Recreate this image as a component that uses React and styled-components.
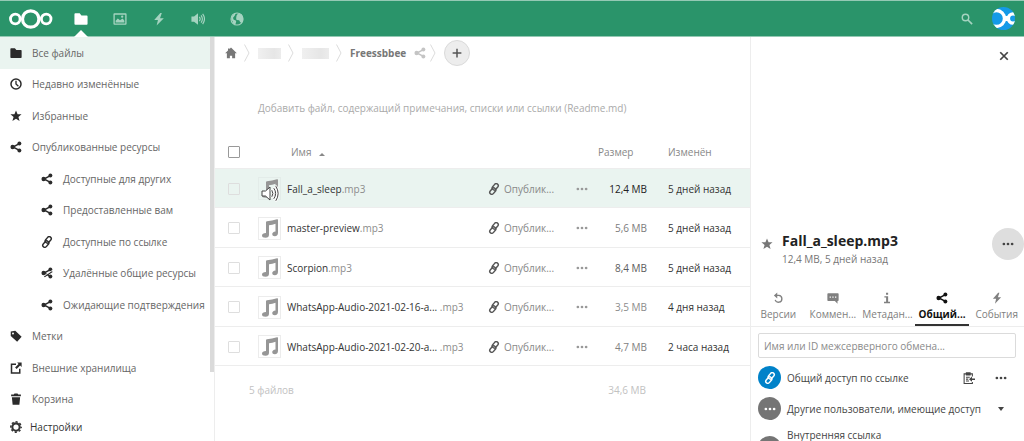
import * as React from 'react';
import styled, { createGlobalStyle } from 'styled-components';

const GlobalStyle = createGlobalStyle`
  :root {
    --colorBrand: #2a946a;
    --colorEdge: #94c9b4;
    --colorActive: #eaf4f0;
    --colorBorder: #ededed;
    --colorText: #333;
    --colorMuted: #767676;
  }
  * {
    box-sizing: border-box;
  }
  body {
    margin: 0;
    background: #fff;
    color: var(--colorText);
    font-family: 'Open Sans', 'Noto Sans', sans-serif;
    font-size: 10px;
    line-height: 16px;
  }
  button, input {
    font: inherit;
    color: inherit;
  }
  a {
    color: inherit;
    text-decoration: none;
  }
`;

const Page = styled.div`
  display: flex;
  flex-direction: column;
  height: 100vh;
  overflow: hidden;
`;
const Header = styled.header`
  flex: none;
  display: flex;
  align-items: stretch;
  justify-content: space-between;
  height: 37px;
  padding-left: 9px;
  border-top: 1px solid var(--colorEdge);
  border-bottom: 1px solid var(--colorEdge);
  background: var(--colorBrand);
  color: #fff;
`;
const HeaderGroup = styled.div`
  display: flex;
  align-items: center;
`;
const Logo = styled.a`
  display: flex;
  margin-right: 8px;
`;
const AppLink = styled.a`
  position: relative;
  display: flex;
  align-items: center;
  justify-content: center;
  width: 39px;
  height: 35px;
  color: ${({ $active }) => ($active ? '#fff' : '#a5d3c0')};

  &::after {
    content: '';
    display: ${({ $active }) => ($active ? 'block' : 'none')};
    position: absolute;
    bottom: -1px;
    left: 13px;
    border: 7px solid transparent;
    border-top-width: 0;
    border-bottom-color: #fff;
  }
`;
const IconButton = styled.button`
  display: flex;
  align-items: center;
  justify-content: center;
  flex: none;
  width: ${({ $size }) => $size || 26}px;
  height: ${({ $size }) => $size || 26}px;
  padding: 0;
  border: ${({ $outlined }) => ($outlined ? '1px solid #dadada' : '0')};
  border-radius: 50%;
  background: ${({ $fill }) => $fill || 'transparent'};
  color: ${({ $color }) => $color || 'inherit'};
`;
const Columns = styled.div`
  flex: 1;
  min-height: 0;
  display: grid;
  grid-template-columns: 215px minmax(0, 1fr) 274px;
`;

const Sidebar = styled.nav`
  position: relative;
  display: flex;
  flex-direction: column;
  min-height: 0;
  border-right: 1px solid var(--colorBorder);
`;
const NavList = styled.ul`
  flex: 1;
  display: grid;
  grid-auto-rows: 1fr;
  min-height: 0;
  margin: 0;
  padding: 0;
  list-style: none;
`;
const NavLink = styled.a`
  display: flex;
  align-items: center;
  gap: 10px;
  height: 100%;
  padding-left: ${({ $nested }) => ($nested ? 41 : 10)}px;
  background: ${({ $active }) => ($active ? 'var(--colorActive)' : 'transparent')};
  color: #666;

  svg {
    color: #2b2b2b;
  }
`;
const ScrollThumb = styled.div`
  position: absolute;
  top: 0;
  right: 0;
  width: 4px;
  height: 83%;
  background: #dadada;
`;
const SettingsButton = styled.button`
  flex: none;
  display: flex;
  align-items: center;
  gap: 8px;
  height: 26px;
  padding: 0 0 3px 10px;
  border: 0;
  background: none;
  text-align: left;
`;

const Main = styled.main`
  min-width: 0;
  overflow: hidden;
`;
const Breadcrumb = styled.div`
  display: flex;
  align-items: center;
  height: 32px;
  padding-left: 10px;
  color: #777;
`;
const Crumb = styled.a`
  display: flex;
  align-items: center;
  margin-right: ${({ $gap }) => $gap || 7}px;
  font-weight: bold;
  color: #777;
`;
const Redacted = styled.span`
  width: ${({ $width }) => $width}px;
  height: 11px;
  background: linear-gradient(90deg, #f0f0f0, #e6e6e6 70%, #ececec);
`;
const Separator = styled.svg`
  flex: none;
  width: 6px;
  height: 18px;
  margin-right: 8px;
  fill: none;
  stroke: #dcdcdc;
`;
const Readme = styled.p`
  margin: 31px 0 0 43px;
  color: #aaa;
`;
const FileTable = styled.table`
  width: 100%;
  height: 232px;
  margin-top: 18px;
  table-layout: fixed;
  border-collapse: collapse;
`;
const HeadCell = styled.th`
  height: 34px;
  padding: 2px ${({ $right }) => $right || 0}px 0 ${({ $left }) => $left || 0}px;
  border-bottom: 1px solid var(--colorBorder);
  font-weight: normal;
  text-align: ${({ $align }) => $align || 'left'};
  color: #888;
`;
const FileRow = styled.tr`
  background: ${({ $selected }) => ($selected ? 'var(--colorActive)' : 'transparent')};
`;
const Cell = styled.td`
  padding: 2px ${({ $right }) => $right || 0}px 0 ${({ $left }) => $left || 0}px;
  border-bottom: 1px solid var(--colorBorder);
  text-align: ${({ $align }) => $align || 'left'};
  color: ${({ $color }) => $color || 'inherit'};
  white-space: nowrap;
`;
const Checkbox = styled.input.attrs({ type: 'checkbox' })`
  display: block;
  appearance: none;
  width: 12px;
  height: 12px;
  margin: 0 0 0 13px;
  border: 1px solid ${({ $strong }) => ($strong ? '#999' : '#dedede')};
  border-radius: 1px;
`;
const Thumb = styled.div`
  position: relative;
  width: 23px;
  height: 23px;
  padding: 1px;
  border: 1px solid ${({ $playing }) => ($playing ? '#e3ece9' : '#ececec')};

  svg {
    display: block;
  }
`;
const PlayingBadge = styled.span`
  position: absolute;
  top: 7px;
  left: 2px;
`;
const Extension = styled.span`
  color: #8c8c8c;
`;
const SharedLink = styled.a`
  display: flex;
  align-items: center;
  gap: 4px;
  color: #888;

  svg {
    color: #555;
  }
`;
const Summary = styled.div`
  display: flex;
  justify-content: space-between;
  padding: 16px 104px 0 34px;
  color: #c2c2c2;
`;

const Details = styled.aside`
  display: flex;
  flex-direction: column;
  min-width: 0;
  overflow: hidden;
  border-left: 1px solid var(--colorBorder);
`;
const DetailsTop = styled.div`
  display: flex;
  justify-content: flex-end;
  height: 191px;
  padding: 6px 7px;
  flex: none;
`;
const DetailsTitle = styled.div`
  flex: none;
  display: flex;
  align-items: center;
  height: 32px;
  padding-left: 10px;
`;
const TitleText = styled.div`
  flex: 1;
  padding: 9px 0 0 9px;
  color: var(--colorMuted);
`;
const Title = styled.h2`
  margin: 0;
  font-size: 14px;
  line-height: 20px;
  color: #222;
`;
const Tabs = styled.div`
  flex: none;
  display: grid;
  grid-template-columns: repeat(5, minmax(0, 1fr));
  margin-top: 27px;
  border-bottom: 1px solid var(--colorBorder);
`;
const Tab = styled.button`
  display: flex;
  flex-direction: column;
  align-items: center;
  gap: 2px;
  padding: 5px 0 2px;
  border: 0;
  border-bottom: 2px solid ${({ $active }) => ($active ? '#333' : 'transparent')};
  background: none;
  font-weight: ${({ $active }) => ($active ? 'bold' : 'normal')};
  color: ${({ $active }) => ($active ? '#111' : '#808080')};
  white-space: nowrap;
`;
const ShareInput = styled.input`
  flex: none;
  height: 25px;
  margin: 6px 8px 4px 7px;
  padding: 0 5px;
  border: 1px solid #dbdbdb;
  border-radius: 2px;

  &::placeholder {
    color: #8a8a8a;
    opacity: 1;
  }
`;
const ShareRow = styled.div`
  flex: none;
  display: flex;
  align-items: center;
  gap: 6px;
  height: ${({ $tall }) => ($tall ? 47 : 31)}px;
  padding: 0 10px 0 7px;
`;
const ShareName = styled.span`
  flex: 1;
  align-self: ${({ $top }) => ($top ? 'flex-start' : 'center')};
  padding-top: ${({ $top }) => ($top ? 4 : 0)}px;
  line-height: 14px;
  white-space: nowrap;
  color: #444;
`;
const Avatar = styled.span`
  flex: none;
  display: flex;
  align-items: center;
  justify-content: center;
  width: 23px;
  height: 23px;
  border-radius: 50%;
  background: ${({ $fill }) => $fill};
  color: #fff;
`;

const Icon = ({ size = 12, children }) => (
  <svg width={size} height={size} viewBox="0 0 16 16" fill="currentColor" aria-hidden="true">
    {children}
  </svg>
);

const FolderIcon = ({ size }) => (
  <Icon size={size}>
    <path d="M1.5 1.5h5l2 2.5h6a1 1 0 0 1 1 1v8.500a1 1 0 0 1-1 1h-13a1 1 0 0 1-1-1v-11a1 1 0 0 1 1-1z" />
  </Icon>
);
const PictureIcon = () => (
  <Icon size={14}>
    <path
      fillRule="evenodd"
      d="M1.500 1.500h13a1 1 0 0 1 1 1v11a1 1 0 0 1-1 1h-13a1 1 0 0 1-1-1v-11a1 1 0 0 1 1-1zM2 3v10h12V3z"
    />
    <path d="M3 12v-2l2.500-2.500L8 9.500l3-2 2 2.500v2z" />
    <circle cx="10.500" cy="5.300" r="1.300" />
  </Icon>
);
const BoltIcon = ({ size = 14 }) => (
  <Icon size={size}>
    <path d="M9.500 1 2.500 9h4.300L5.300 15.500 13.500 7H9.200l2-6z" />
  </Icon>
);
const SoundIcon = () => (
  <Icon size={14}>
    <path d="M.5 5h3L8 1.500v13L3.500 11h-3z" />
    <path
      fill="none"
      stroke="currentColor"
      strokeWidth="1.300"
      d="M9.500 5.500q2 2.500 0 5M11.500 3.800q3 4.200 0 8.400M13.300 2.200q4.200 5.800 0 11.600"
    />
  </Icon>
);
const GlobeIcon = () => (
  <Icon size={14}>
    <circle cx="8" cy="8" r="6.900" fill="none" stroke="currentColor" strokeWidth="1.200" />
    <path d="M1.500 6 4 2.500 6.500 1.500 5.500 4 3.500 6.500 4 8.500l3 1.500v1.500l-1 3L3.500 13 3 10.500 1.500 9zM7.500 4 9 2l4 .5L15 6v4l-2 2.500-1.500-1-1-2-3-.5L7 7z" />
  </Icon>
);
const ShareIcon = ({ size }) => (
  <Icon size={size}>
    <path fill="none" stroke="currentColor" strokeWidth="2" d="M12.500 3.500 4 8l8.500 4.500" />
    <circle cx="12.500" cy="3.300" r="2.600" />
    <circle cx="3.500" cy="8" r="2.900" />
    <circle cx="12.500" cy="12.700" r="2.600" />
  </Icon>
);
const UnshareIcon = () => (
  <Icon>
    <path fill="none" stroke="currentColor" strokeWidth="2" d="M12.500 3.500 4 8l8.500 4.500M4.500 13 15 6" />
    <circle cx="12.500" cy="3.300" r="2.600" />
    <circle cx="3.500" cy="8" r="2.900" />
    <circle cx="12.500" cy="12.700" r="2.600" />
    <path fill="none" stroke="#fff" strokeWidth="1" d="M5 11.300 15 4.600" />
  </Icon>
);
const LinkIcon = () => (
  <Icon>
    <g transform="rotate(-50 8 8)" fill="none" stroke="currentColor" strokeWidth="1.900">
      <rect x="0" y="5.900" width="9.500" height="5.400" rx="2.700" />
      <rect x="6.500" y="4.700" width="9.500" height="5.400" rx="2.700" />
    </g>
  </Icon>
);
const ClockIcon = () => (
  <Icon>
    <circle cx="8" cy="8" r="6.700" fill="none" stroke="currentColor" strokeWidth="2" />
    <path fill="none" stroke="currentColor" strokeWidth="1.800" d="M8 3.500V8l3.200 3" />
  </Icon>
);
const StarIcon = () => (
  <Icon>
    <path d="m8 .8 2.100 5h5.300l-4.200 3.400 1.600 5.600L8 11.500l-4.800 3.300 1.600-5.600L.6 5.800h5.300z" />
  </Icon>
);
const TagIcon = () => (
  <Icon>
    <path
      fillRule="evenodd"
      d="M1 2 7 1l8.500 8-6 6.500L1 8zM4 3.300a1.300 1.300 0 1 0 0 2.600 1.300 1.300 0 0 0 0-2.600z"
    />
  </Icon>
);
const ExternalIcon = () => (
  <Icon>
    <path fill="none" stroke="currentColor" strokeWidth="2" d="M8 3H2v11.500h11V9" />
    <path d="M9.500.5h6v6.200l-2-2-4.700 4.600-2-2 4.600-4.600z" />
  </Icon>
);
const TrashIcon = () => (
  <Icon>
    <path d="M6 .8h4L11 2h3.500v2.300h-13V2H5zM2.500 5.500h11L12.500 15.500h-9z" />
  </Icon>
);
const GearIcon = () => (
  <Icon>
    <circle cx="8" cy="8" r="4.900" fill="none" stroke="currentColor" strokeWidth="2.800" />
    <circle
      cx="8"
      cy="8"
      r="6.900"
      fill="none"
      stroke="currentColor"
      strokeWidth="2"
      strokeDasharray="2.900 2.519"
      strokeDashoffset="1.450"
    />
  </Icon>
);
const HomeIcon = () => (
  <Icon>
    <path d="m8 .8 7.800 7.400h-2.300V15h-4v-3.500h-3V15h-4V8.200H.2L4 4.600V2h2v.8z" />
  </Icon>
);
const DotsIcon = () => (
  <Icon>
    <circle cx="2.500" cy="8" r="1.800" />
    <circle cx="8" cy="8" r="1.800" />
    <circle cx="13.500" cy="8" r="1.800" />
  </Icon>
);
const NoteIcon = () => (
  <svg width="19" height="19" viewBox="0 0 19 19" fill="#969696" aria-hidden="true">
    <path d="M7 2.200Q12 2 17 .3q1-.3 1 .7v12.500q0 3.800-3.300 3.800-2.500 0-2.500-2 0-2.300 3.300-2.800V4.800Q12.500 6 9 6.200v9.300q0 3.200-3.500 3.200-3.500 0-3.500-2.200 0-2.300 4-2.500V3.300q0-1 1-1.100z" />
  </svg>
);
const SpeakerBadgeIcon = () => (
  <svg width="19" height="17" viewBox="0 0 19 17" aria-hidden="true">
    <path d="M1 6h3.500L9 2v13l-4.500-4H1z" fill="#fff" stroke="#444" />
    <g fill="none" strokeLinecap="round">
      <path d="M11 5.500q2 3 0 6M13 3.500q3.500 5 0 10M15 1.500q4.500 7 0 14" stroke="#fff" strokeWidth="2.500" />
      <path d="M11 5.500q2 3 0 6M13 3.500q3.500 5 0 10M15 1.500q4.500 7 0 14" stroke="#444" />
    </g>
  </svg>
);
const CommentIcon = () => (
  <Icon>
    <path
      fillRule="evenodd"
      d="M1.500 1.500h13a1 1 0 0 1 1 1v8.500a1 1 0 0 1-1 1h-.5v3.500L10.500 12h-9a1 1 0 0 1-1-1V2.500a1 1 0 0 1 1-1zM3.500 6v1.700h1.700V6zM7.100 6v1.700h1.700V6zM10.700 6v1.700h1.700V6z"
    />
  </Icon>
);
const HistoryIcon = () => (
  <Icon>
    <path fill="none" stroke="currentColor" strokeWidth="1.800" d="M5 4.500h4a4.600 4.600 0 1 1-4.800 6" />
    <path d="M7 .5v8L2.500 4.500z" />
  </Icon>
);
const InfoIcon = () => (
  <Icon>
    <path d="M6.700 1h2.800v2.500H6.700zM4.500 5.500h5V13H12v2H4v-2h2.800V7.400H4.500z" />
  </Icon>
);
const ClipboardIcon = () => (
  <Icon>
    <g fill="none" stroke="currentColor" strokeWidth="1.400">
      <path d="M12.500 6V2.500h-11v12.800h11v-2M4.500 1h5v3h-5zM4 7h5M4 9.500h3M4 12h4" />
    </g>
    <path d="M8 9.500 12 6v2.500h4v2h-4V13z" />
  </Icon>
);
const CaretIcon = ({ up }) => (
  <svg width="6" height="4" viewBox="0 0 6 4" fill="currentColor" aria-hidden="true">
    <path d={up ? 'M0 4 3 1l3 3z' : 'M0 0h6L3 4z'} />
  </svg>
);

const NAV = [
  { label: 'Все файлы', icon: FolderIcon, active: true },
  { label: 'Недавно изменённые', icon: ClockIcon },
  { label: 'Избранные', icon: StarIcon },
  { label: 'Опубликованные ресурсы', icon: ShareIcon },
  { label: 'Доступные для других', icon: ShareIcon, nested: true },
  { label: 'Предоставленные вам', icon: ShareIcon, nested: true },
  { label: 'Доступные по ссылке', icon: LinkIcon, nested: true },
  { label: 'Удалённые общие ресурсы', icon: UnshareIcon, nested: true },
  { label: 'Ожидающие подтверждения', icon: ShareIcon, nested: true },
  { label: 'Метки', icon: TagIcon },
  { label: 'Внешние хранилища', icon: ExternalIcon },
  { label: 'Корзина', icon: TrashIcon },
];

const FILES = [
  { name: 'Fall_a_sleep', size: '12,4 MB', color: '#222', date: '5 дней назад', playing: true },
  { name: 'master-preview', size: '5,6 MB', color: '#7c7c7c', date: '5 дней назад' },
  { name: 'Scorpion', size: '8,4 MB', color: '#5c5c5c', date: '5 дней назад' },
  { name: 'WhatsApp-Audio-2021-02-16-a... ', size: '3,5 MB', color: '#8c8c8c', date: '4 дня назад' },
  { name: 'WhatsApp-Audio-2021-02-20-a... ', size: '4,7 MB', color: '#828282', date: '2 часа назад' },
];

const TABS = [
  { label: 'Версии', icon: HistoryIcon },
  { label: 'Коммен...', icon: CommentIcon },
  { label: 'Метадан...', icon: InfoIcon },
  { label: 'Общий...', icon: ShareIcon, active: true },
  { label: 'События', icon: () => <BoltIcon size={12} /> },
];

const Chevron = () => (
  <Separator viewBox="0 0 6 18" aria-hidden="true">
    <path d="M.5.5 5 9 .5 17.500" />
  </Separator>
);

const TopBar = () => (
  <Header>
    <HeaderGroup>
      <Logo href="#" aria-label="Nextcloud">
        <svg width="44" height="22" viewBox="0 0 44 22" fill="none" stroke="#fff" aria-hidden="true">
          <circle cx="21.700" cy="11" r="8.200" strokeWidth="3.200" />
          <circle cx="6.300" cy="11" r="4.800" strokeWidth="2.800" />
          <circle cx="37.200" cy="11" r="4.800" strokeWidth="2.800" />
        </svg>
      </Logo>
      <AppLink href="#" aria-label="Файлы" $active>
        <FolderIcon size={14} />
      </AppLink>
      <AppLink href="#" aria-label="Фотографии">
        <PictureIcon />
      </AppLink>
      <AppLink href="#" aria-label="События">
        <BoltIcon />
      </AppLink>
      <AppLink href="#" aria-label="Музыка">
        <SoundIcon />
      </AppLink>
      <AppLink href="#" aria-label="Сайты">
        <GlobeIcon />
      </AppLink>
    </HeaderGroup>
    <HeaderGroup>
      <IconButton aria-label="Поиск" $size={30} $color="#a5d3c0">
        <Icon>
          <circle cx="6" cy="6" r="4.300" fill="none" stroke="currentColor" strokeWidth="1.900" />
          <path fill="none" stroke="currentColor" strokeWidth="2.300" d="m9 9 5.800 5.800" />
        </Icon>
      </IconButton>
      <IconButton aria-label="Профиль" $size={42}>
        <svg width="23" height="23" viewBox="0 0 23 23" aria-hidden="true">
          <clipPath id="face">
            <circle cx="11.500" cy="11.500" r="11.500" />
          </clipPath>
          <g clipPath="url(#face)">
            <rect width="23" height="23" fill="#149ae8" />
            <circle cx="4.500" cy="11.500" r="8" fill="none" stroke="#fff" strokeWidth="3.400" />
            <circle cx="21" cy="11.500" r="4.600" fill="none" stroke="#fff" strokeWidth="3.400" />
            <path d="M11 9h5v5h-5z" fill="#fff" />
          </g>
        </svg>
      </IconButton>
    </HeaderGroup>
  </Header>
);

const Navigation = () => (
  <Sidebar>
    <NavList>
      {NAV.map(({ label, icon: NavIcon, active, nested }) => (
        <li key={label}>
          <NavLink href="#" $active={active} $nested={nested}>
            <NavIcon />
            {label}
          </NavLink>
        </li>
      ))}
    </NavList>
    <SettingsButton>
      <GearIcon />
      Настройки
    </SettingsButton>
    <ScrollThumb />
  </Sidebar>
);

const Files = () => (
  <Main>
    <Breadcrumb>
      <Crumb href="#" aria-label="Домой">
        <HomeIcon />
      </Crumb>
      <Chevron />
      <Crumb href="#" aria-label="Папка">
        <Redacted $width={23} />
      </Crumb>
      <Chevron />
      <Crumb href="#" aria-label="Вложенная папка">
        <Redacted $width={27} />
      </Crumb>
      <Chevron />
      <Crumb href="#" $gap={4}>
        Freessbbee
      </Crumb>
      <IconButton aria-label="Поделиться" $size={20} $color="#c4c4c4">
        <ShareIcon />
      </IconButton>
      <Chevron />
      <IconButton aria-label="Создать" $fill="#ededed" $color="#555" $outlined>
        <Icon size={10}>
          <path d="M6.800 1h2.400v5.800H15v2.400H9.200V15H6.800V9.200H1V6.800h5.800z" />
        </Icon>
      </IconButton>
    </Breadcrumb>
    <Readme>Добавить файл, содержащий примечания, списки или ссылки (Readme.md)</Readme>
    <FileTable>
      <colgroup>
        <col width="43" />
        <col width="29" />
        <col />
        <col width="84" />
        <col width="26" />
        <col width="70" />
        <col width="82" />
      </colgroup>
      <thead>
        <tr>
          <HeadCell>
            <Checkbox $strong aria-label="Выбрать все" />
          </HeadCell>
          <HeadCell />
          <HeadCell $left={4}>
            Имя &nbsp;&nbsp;<CaretIcon up />
          </HeadCell>
          <HeadCell />
          <HeadCell />
          <HeadCell $align="right" $right={36}>
            Размер
          </HeadCell>
          <HeadCell>Изменён</HeadCell>
        </tr>
      </thead>
      <tbody>
        {FILES.map(({ name, size, color, date, playing }) => (
          <FileRow key={name} $selected={playing}>
            <Cell>
              <Checkbox aria-label={name} />
            </Cell>
            <Cell>
              <Thumb $playing={playing}>
                <NoteIcon />
                {playing && (
                  <PlayingBadge>
                    <SpeakerBadgeIcon />
                  </PlayingBadge>
                )}
              </Thumb>
            </Cell>
            <Cell>
              {name}
              <Extension>.mp3</Extension>
            </Cell>
            <Cell>
              <SharedLink href="#">
                <LinkIcon />
                Опублик...
              </SharedLink>
            </Cell>
            <Cell>
              <IconButton aria-label="Действия" $size={20} $color="#999">
                <DotsIcon />
              </IconButton>
            </Cell>
            <Cell $align="right" $right={21} $color={color}>
              {size}
            </Cell>
            <Cell>{date}</Cell>
          </FileRow>
        ))}
      </tbody>
    </FileTable>
    <Summary>
      <span>5 файлов</span>
      <span>34,6 MB</span>
    </Summary>
  </Main>
);

const FileDetails = () => (
  <Details>
    <DetailsTop>
      <IconButton aria-label="Закрыть" $color="#444">
        <Icon>
          <path fill="none" stroke="currentColor" strokeWidth="2.300" d="m3 3 10 10M13 3 3 13" />
        </Icon>
      </IconButton>
    </DetailsTop>
    <DetailsTitle>
      <IconButton aria-label="Избранное" $size={12} $color="#777">
        <StarIcon />
      </IconButton>
      <TitleText>
        <Title>Fall_a_sleep.mp3</Title>
        12,4 MB, 5 дней назад
      </TitleText>
      <IconButton aria-label="Действия" $size={32} $fill="#dedede" $color="#444">
        <DotsIcon />
      </IconButton>
    </DetailsTitle>
    <Tabs role="tablist">
      {TABS.map(({ label, icon: TabIcon, active }) => (
        <Tab key={label} role="tab" aria-selected={Boolean(active)} $active={active}>
          <TabIcon />
          {label}
        </Tab>
      ))}
    </Tabs>
    <ShareInput
      type="text"
      aria-label="Имя или ID межсерверного обмена"
      placeholder="Имя или ID межсерверного обмена..."
    />
    <ShareRow>
      <Avatar $fill="#0082c9">
        <LinkIcon />
      </Avatar>
      <ShareName>Общий доступ по ссылке</ShareName>
      <IconButton aria-label="Копировать ссылку" $color="#444">
        <ClipboardIcon />
      </IconButton>
      <IconButton aria-label="Действия" $color="#444">
        <DotsIcon />
      </IconButton>
    </ShareRow>
    <ShareRow>
      <Avatar $fill="#757575">
        <DotsIcon />
      </Avatar>
      <ShareName>Другие пользователи, имеющие доступ</ShareName>
      <IconButton aria-label="Развернуть" $color="#444">
        <CaretIcon />
      </IconButton>
    </ShareRow>
    <ShareRow $tall>
      <Avatar $fill="#757575" />
      <ShareName $top>Внутренняя ссылка</ShareName>
    </ShareRow>
  </Details>
);

const App = () => (
  <Page>
    <GlobalStyle />
    <TopBar />
    <Columns>
      <Navigation />
      <Files />
      <FileDetails />
    </Columns>
  </Page>
);

export default App;
